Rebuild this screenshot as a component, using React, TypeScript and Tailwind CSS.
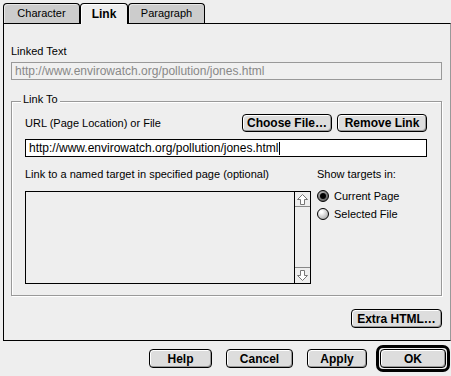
import React from 'react';

const btn =
  'flex items-center justify-center rounded-[4px] border border-black bg-[#dddddd] shadow-[inset_1px_1px_0_#ffffff,inset_-1px_-1px_0_#999999] text-[12px] font-bold text-black leading-none';

function ArrowUp() {
  return (
    <svg width="13" height="13" viewBox="0 0 13 13">
      <path d="M6.5 1.5 L11.5 6.5 H8.5 V11.5 H4.5 V6.5 H1.5 Z" fill="#ffffff" stroke="#777777" strokeWidth="1" />
    </svg>
  );
}

function ArrowDown() {
  return (
    <svg width="13" height="13" viewBox="0 0 13 13">
      <path d="M6.5 11.5 L11.5 6.5 H8.5 V1.5 H4.5 V6.5 H1.5 Z" fill="#ffffff" stroke="#777777" strokeWidth="1" />
    </svg>
  );
}

export default function App() {
  return (
    <div className="w-[451px] h-[376px] bg-[#eeeeee] overflow-hidden font-['Liberation_Sans',Arial,sans-serif] text-[11px] text-black">
      {/* Tabs */}
      <div className="flex items-end pl-[3px] pt-[3px] h-[23px]">
        <div className="w-[77px] h-[20px] flex items-center justify-center rounded-t-[4px] border border-b-0 border-black bg-[#cccccc] shadow-[inset_1px_1px_0_#e6e6e6]">
          Character
        </div>
        <div className="relative z-10 w-[48px] h-[21px] -mb-px flex items-center justify-center rounded-t-[4px] border border-b-0 border-black bg-[#eeeeee] shadow-[inset_1px_1px_0_#ffffff] text-[12px] font-bold pb-px">
          Link
        </div>
        <div className="w-[77px] h-[20px] flex items-center justify-center rounded-t-[4px] border border-b-0 border-black bg-[#cccccc] shadow-[inset_1px_1px_0_#e6e6e6]">
          Paragraph
        </div>
      </div>

      {/* Panel */}
      <div className="ml-[3px] w-[448px] h-[318px] border-t border-l border-b border-black border-r border-r-[#999999] pl-[7px] pt-[21px] flex flex-col">
        <div className="leading-[13px] h-[13px]">Linked Text</div>
        <div className="mt-[4px] w-[431px] h-[18px] border border-[#999999] bg-[#f0f0f0] flex items-center px-[3px] text-[12px] text-[#888888]">
          http://www.envirowatch.org/pollution/jones.html
        </div>

        {/* Link To group */}
        <div className="relative mt-[21px] w-[431px] h-[195px] border border-[#999999] shadow-[1px_1px_0_#ffffff,inset_1px_1px_0_#ffffff] pl-[13px] pr-[14px] pt-[12px]">
          <div className="absolute left-[9px] top-[-9px] px-[2px] bg-[#eeeeee] leading-[13px]">Link To</div>

          <div className="flex items-center h-[18px]">
            <div className="flex-1 leading-[13px]">URL (Page Location) or File</div>
            <div className={`${btn} w-[90px] h-[18px]`}>Choose File…</div>
            <div className={`${btn} w-[90px] h-[18px] ml-[5px]`}>Remove Link</div>
          </div>

          <div className="mt-[7px] h-[18px] border border-black bg-white flex items-center pl-[3px] text-[12px]">
            <span>http://www.envirowatch.org/pollution/jones.html</span>
            <span className="ml-px w-px h-[13px] bg-black" />
          </div>

          <div className="mt-[11px] flex gap-[6px]">
            <div className="w-[286px] flex flex-col">
              <div className="leading-[13px] h-[13px]">Link to a named target in specified page (optional)</div>
              <div className="mt-[10px] h-[93px] border border-black bg-[#eeeeee] flex justify-end">
                <div className="w-[16px] h-full border-l border-black flex flex-col justify-between">
                  <div className="h-[15px] border-b border-[#888888] flex items-center justify-center">
                    <ArrowUp />
                  </div>
                  <div className="h-[16px] border-t border-[#888888] flex items-center justify-center">
                    <ArrowDown />
                  </div>
                </div>
              </div>
            </div>

            <div className="flex flex-col">
              <div className="leading-[13px] h-[13px]">Show targets in:</div>
              <div className="mt-[7px] h-[16px] flex items-center gap-[5px]">
                <div className="w-[12px] h-[12px] rounded-full border border-black bg-[radial-gradient(circle_at_35%_30%,#bbbbbb,#444444)] flex items-center justify-center">
                  <div className="w-[6px] h-[6px] rounded-full bg-black" />
                </div>
                <span className="leading-[13px]">Current Page</span>
              </div>
              <div className="mt-[2px] h-[16px] flex items-center gap-[5px]">
                <div className="w-[12px] h-[12px] rounded-full border border-black bg-[radial-gradient(circle_at_35%_30%,#ffffff_10%,#999999)]" />
                <span className="leading-[13px]">Selected File</span>
              </div>
            </div>
          </div>
        </div>

        <div className="mt-[13px] w-[431px] flex justify-end">
          <div className={`${btn} w-[91px] h-[19px]`}>Extra HTML…</div>
        </div>
      </div>

      {/* Bottom buttons */}
      <div className="mt-[4px] flex items-center justify-end pr-[1px]">
        <div className={`${btn} w-[63px] h-[19px]`}>Help</div>
        <div className={`${btn} w-[67px] h-[19px] ml-[14px]`}>Cancel</div>
        <div className={`${btn} w-[60px] h-[19px] ml-[14px]`}>Apply</div>
        <div className="ml-[9px] w-[74px] h-[27px] rounded-[7px] border-[3px] border-black p-px">
          <div className={`${btn} w-full h-full`}>OK</div>
        </div>
      </div>
    </div>
  );
}
